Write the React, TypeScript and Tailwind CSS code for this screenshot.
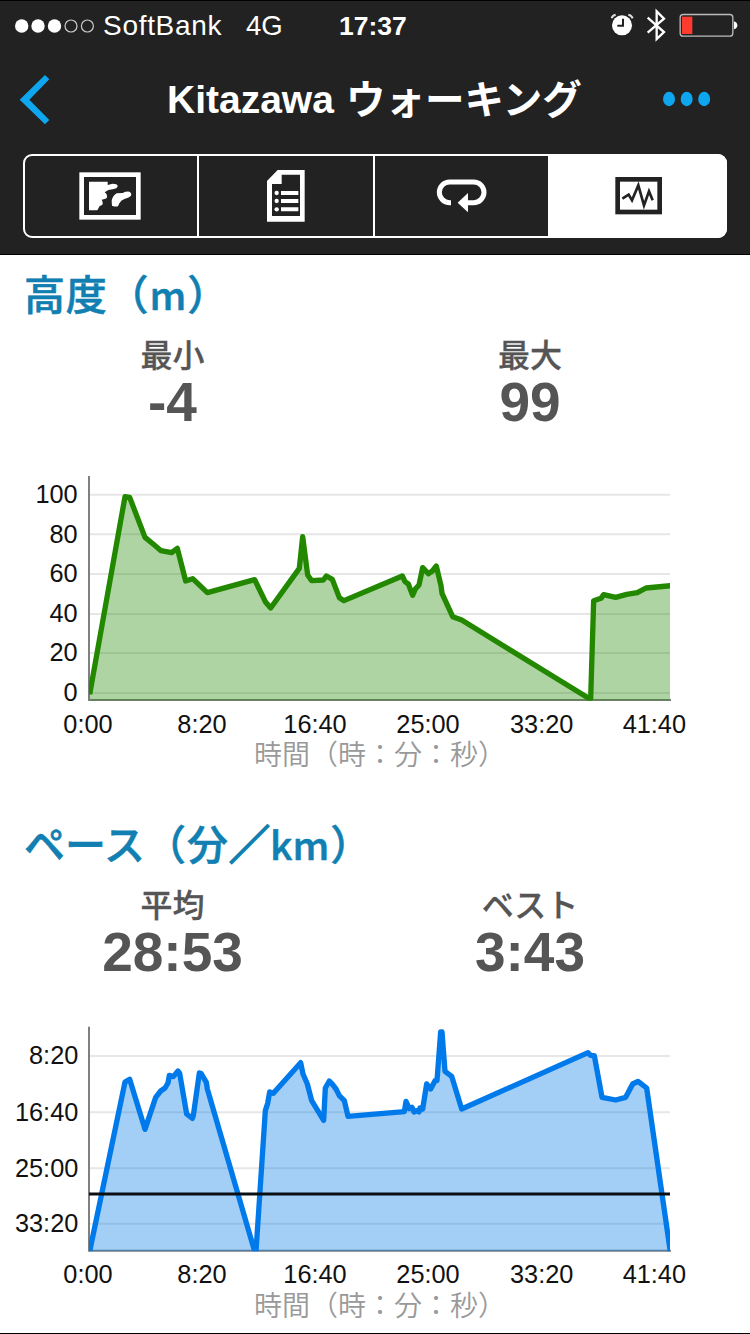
import React from "react";

type Point = [number, number];
type Tick = { at: number; label: string };

type ChartProps = {
  points: Point[];
  stroke: string;
  fill: string;
  top: number;
  bottom: number;
  yTicks: Tick[];
  labelRight: number;
  xBaseline: number;
  captionBaseline: number;
  average?: number;
};

const X_TICKS: Tick[] = [
  { at: 264, label: "0:00" },
  { at: 606, label: "8:20" },
  { at: 945, label: "16:40" },
  { at: 1284, label: "25:00" },
  { at: 1625, label: "33:20" },
  { at: 1963, label: "41:40" },
];

const ALTITUDE: Point[] = [
  [269, 688], [375, 95], [389, 97], [435, 217], [463, 240], [483, 257], [515, 263], [532, 250],
  [557, 348], [578, 341], [622, 383], [764, 344], [796, 410], [812, 429], [898, 310], [908, 215],
  [923, 330], [935, 347], [970, 345], [979, 333], [997, 343], [1018, 398], [1032, 407], [1207, 333],
  [1215, 350], [1225, 357], [1238, 391], [1246, 372], [1257, 360], [1268, 308], [1285, 326],
  [1297, 318], [1309, 303], [1323, 362], [1326, 385], [1358, 455], [1385, 465], [1766, 700],
  [1772, 700], [1781, 407], [1803, 400], [1811, 389], [1847, 397], [1880, 388], [1912, 383],
  [1938, 369], [2014, 362],
];

const PACE: Point[] = [
  [269, 712], [375, 204], [389, 196], [435, 346], [467, 250], [482, 231], [495, 222], [504, 207],
  [508, 184], [520, 188], [534, 171], [539, 178], [560, 300], [577, 313], [580, 305], [598, 177],
  [603, 178], [619, 205], [622, 225], [764, 712], [768, 712], [796, 290], [803, 268], [809, 234],
  [820, 238], [902, 146], [909, 180], [922, 210], [935, 260], [971, 319], [976, 222], [988, 201],
  [998, 212], [1008, 225], [1018, 245], [1033, 260], [1044, 307], [1213, 293], [1218, 262],
  [1228, 284], [1236, 280], [1242, 294], [1250, 290], [1257, 294], [1260, 282], [1268, 285],
  [1280, 210], [1292, 225], [1305, 200], [1311, 200], [1322, 54], [1326, 54], [1335, 172],
  [1355, 187], [1385, 285], [1764, 116], [1772, 124], [1783, 125], [1806, 250], [1847, 258],
  [1877, 250], [1898, 210], [1914, 202], [1940, 222], [2012, 720],
];

function Chart(props: ChartProps) {
  const { points, stroke, fill, top, bottom, yTicks, labelRight, xBaseline, captionBaseline, average } = props;
  const line = points.map((p) => p.join(",")).join(" ");
  const area = `270,${bottom} ${line} 2010,${bottom}`;
  const clip = `plot-${top}`;
  return (
    <svg width={750} height={320} viewBox="0 0 2250 960" className="block shrink-0">
      <defs>
        <clipPath id={clip}>
          <rect x={267} y={0} width={1743} height={bottom} />
        </clipPath>
      </defs>
      {yTicks.map((t) => (
        <line key={t.label} x1={270} x2={2010} y1={t.at} y2={t.at} stroke="#e6e6e6" strokeWidth={6} />
      ))}
      <path d={`M267 ${top}V${bottom - 2}H2013`} fill="none" stroke="#808080" strokeWidth={6} />
      <g clipPath={`url(#${clip})`}>
        <polygon points={area} fill={fill} />
        <polyline points={line} fill="none" stroke={stroke} strokeWidth={16} strokeLinejoin="round" />
      </g>
      {average !== undefined && (
        <line x1={267} x2={2010} y1={average} y2={average} stroke="#0a0f14" strokeWidth={9} />
      )}
      <g fontSize={76} fill="#111" className="font-['Liberation_Sans',sans-serif]">
        {yTicks.map((t) => (
          <text key={t.label} x={labelRight} y={t.at + 25} textAnchor="end">
            {t.label}
          </text>
        ))}
        {X_TICKS.map((t) => (
          <text key={t.label} x={t.at} y={xBaseline} textAnchor="middle">
            {t.label}
          </text>
        ))}
      </g>
      <text
        x={762}
        y={captionBaseline}
        fontSize={84}
        fill="#999"
        className="font-['Noto_Sans_CJK_JP',sans-serif] font-[350]"
      >
        時間（時：分：秒）
      </text>
    </svg>
  );
}

function Stat({ label, value }: { label: string; value: string }) {
  return (
    <div className="flex flex-col items-center text-[#555]">
      <div className="h-[40px] font-['Noto_Sans_CJK_JP',sans-serif] text-[32px] leading-[38px] font-medium [-webkit-text-stroke:0.3px_#555]">
        {label}
      </div>
      <div className="h-[56px] font-['Liberation_Sans',sans-serif] text-[55px] leading-[56px] font-bold">
        {value}
      </div>
    </div>
  );
}

function Heading({ children }: { children: React.ReactNode }) {
  return (
    <h2 className="h-[60px] pl-6 font-['Noto_Sans_CJK_JP',sans-serif] text-[41px] leading-[60px] font-medium whitespace-nowrap text-[#117fb1] [-webkit-text-stroke:0.6px_#117fb1]">
      {children}
    </h2>
  );
}

function StatusBar() {
  return (
    <div className="flex h-[50px] items-center font-['Liberation_Sans',sans-serif] text-white">
      <svg width={80} height={16} viewBox="0 0 80 16" className="ml-[15px]">
        <circle cx="6.7" cy="8" r="6.7" fill="#fff" />
        <circle cx="23" cy="8" r="6.7" fill="#fff" />
        <circle cx="39.5" cy="8" r="6.7" fill="#fff" />
        <circle cx="56" cy="8" r="6" fill="none" stroke="#ccc" strokeWidth="1.2" />
        <circle cx="72.4" cy="8" r="6" fill="none" stroke="#ccc" strokeWidth="1.2" />
      </svg>
      <div className="ml-[8px] w-[143px] text-[28px] leading-none tracking-[0.7px]">SoftBank</div>
      <div className="w-[93px] text-[27.5px] leading-none">4G</div>
      <div className="w-[271px] text-[26.5px] leading-none font-bold">17:37</div>
      <svg width={130} height={40} viewBox="704 18 390 120" className="shrink-0">
        <circle cx="740" cy="76" r="30" fill="#fff" />
        <path d="M743 56V77H726" fill="none" stroke="#222" strokeWidth="6" />
        <path d="M709 55Q711 46 721 44M759 44Q769 46 772 55" fill="none" stroke="#ddd" strokeWidth="6" />
        <path d="M817 53L866 96L844 117V34L866 56L817 98" fill="none" stroke="#fff" strokeWidth="7" />
        <rect x="914.500" y="43.500" width="158" height="65" rx="9" fill="none" stroke="#bbb" strokeWidth="4" />
        <rect x="920" y="50" width="31" height="52" fill="#ff3b30" />
        <path d="M1076 64Q1086 67 1086 76T1076 88Z" fill="#fff" />
      </svg>
    </div>
  );
}

function NavBar() {
  return (
    <div className="flex h-[103px] items-center pb-[8px]">
      <svg width={32} height={52} viewBox="54 219 96 156" className="ml-[18px]">
        <path d="M135 225L148 238L88 299L148 360L135 373L59 299Z" fill="#0ea6ef" />
      </svg>
      <h1 className="ml-[117px] flex w-[495px] items-center whitespace-pre text-white">
        <span className="mt-[2px] font-['Liberation_Sans',sans-serif] text-[39px] leading-[60px] font-bold">
          Kitazawa
        </span>
        <span className="mb-[4px] ml-[12px] font-['Noto_Sans_CJK_JP',sans-serif] text-[39.5px] leading-[60px] font-bold">
          ウォーキング
        </span>
      </h1>
      <svg width={50} height={20} viewBox="861 265 150 60">
        <ellipse cx="882" cy="295" rx="18" ry="21.500" fill="#0ea6ef" />
        <ellipse cx="935" cy="295" rx="18" ry="21.500" fill="#0ea6ef" />
        <ellipse cx="987.500" cy="295" rx="18" ry="21.500" fill="#0ea6ef" />
      </svg>
    </div>
  );
}

function Segments() {
  return (
    <div className="ml-[23px] flex h-[84px] w-[704px] rounded-[9px] border-2 border-white">
      <button className="w-[174px] shrink-0 border-r-2 border-white">
        <svg width={172} height={80} viewBox="75 48 516 240">
          <rect x="245" y="104" width="170" height="128" fill="none" stroke="#fff" strokeWidth="14" />
          <path
            d="M267 125H323V135L338 131Q352 131 353 138Q352 146 338 148Q324 148 314 157Q322 162 321 172Q319 178 305 179Q309 185 308 193Q306 197 299 198L292 211H267Z"
            fill="#fff"
          />
          <path
            d="M335 183Q337 168 350 160L368 159Q378 154 388 155Q396 159 393 167Q388 173 375 176Q363 180 358 190L354 199Q346 201 336 197Z"
            fill="#fff"
          />
        </svg>
      </button>
      <button className="w-[176px] shrink-0 border-r-2 border-white">
        <svg width={174} height={80} viewBox="597 48 522 240">
          <path
            d="M833 90H914V245H801V123ZM845 104V132H816V228H900V104Z"
            fill="#fff"
            fillRule="evenodd"
          />
          <circle cx="830" cy="159" r="6.500" fill="#fff" />
          <circle cx="830" cy="183" r="6.500" fill="#fff" />
          <circle cx="830" cy="208" r="6.500" fill="#fff" />
          <path d="M843 159H895M843 183H895M843 208H895" stroke="#fff" strokeWidth="12" />
        </svg>
      </button>
      <button className="w-[173px] shrink-0">
        <svg width={173} height={80} viewBox="0 48 519 240">
          <path
            d="M228 188H224A31 31 0 0 1 193 157A31 31 0 0 1 224 126H296A31 31 0 0 1 327 157A31 31 0 0 1 296 188H275"
            fill="none"
            stroke="#fff"
            strokeWidth="15"
          />
          <path d="M248 188L279 159V217Z" fill="#fff" />
        </svg>
      </button>
      <button className="-mt-[2px] h-[84px] w-[179px] shrink-0 rounded-r-[9px] bg-white">
        <svg width={177} height={80} viewBox="519 48 531 240">
          <rect x="728" y="118" width="126" height="98" fill="none" stroke="#222" strokeWidth="14" />
          <path
            d="M742 176L761 164L771 181L790 136L807 196L822 154L833 181"
            fill="none"
            stroke="#222"
            strokeWidth="8"
          />
        </svg>
      </button>
    </div>
  );
}

export default function App() {
  return (
    <div className="flex h-[1334px] w-[750px] flex-col overflow-hidden border-y border-black bg-white">
      <header className="h-[254px] shrink-0 border-b border-black bg-[#222]">
        <StatusBar />
        <NavBar />
        <Segments />
      </header>
      <section className="flex h-[550px] shrink-0 flex-col pt-[7px]">
        <Heading>
          <span className="tracking-[0.8px]">高度（</span>
          <span className="text-[39px]">m</span>
          <span className="ml-[1px]">）</span>
        </Heading>
        <div className="grid h-[143px] shrink-0 grid-cols-[345px_370px] pt-[12px]">
          <Stat label="最小" value="-4" />
          <Stat label="最大" value="99" />
        </div>
        <Chart
          points={ALTITUDE}
          stroke="#228800"
          fill="rgba(34,136,0,0.36)"
          top={33}
          bottom={707}
          yTicks={[
            { at: 89, label: "100" },
            { at: 208, label: "80" },
            { at: 327, label: "60" },
            { at: 447, label: "40" },
            { at: 564, label: "20" },
            { at: 684, label: "0" },
          ]}
          labelRight={233}
          xBaseline={803}
          captionBaseline={901}
        />
      </section>
      <section className="-mt-px flex shrink-0 flex-col pt-[8px]">
        <Heading>
          <span>ペース（</span>
          <span className="ml-[1px]">分</span>
          <span className="ml-[1px] [-webkit-text-stroke:1.8px_#117fb1]">／</span>
          <span className="text-[39px]">km</span>
          <span className="ml-[1px]">）</span>
        </Heading>
        <div className="grid h-[142px] shrink-0 grid-cols-[345px_370px] pt-[12px]">
          <Stat label="平均" value="28:53" />
          <Stat label="ベスト" value="3:43" />
        </div>
        <Chart
          points={PACE}
          stroke="#007aeb"
          fill="rgba(0,122,230,0.36)"
          top={38}
          bottom={712}
          yTicks={[
            { at: 126, label: "8:20" },
            { at: 295, label: "16:40" },
            { at: 463, label: "25:00" },
            { at: 629, label: "33:20" },
          ]}
          labelRight={235}
          xBaseline={808}
          captionBaseline={906}
          average={540}
        />
      </section>
    </div>
  );
}
